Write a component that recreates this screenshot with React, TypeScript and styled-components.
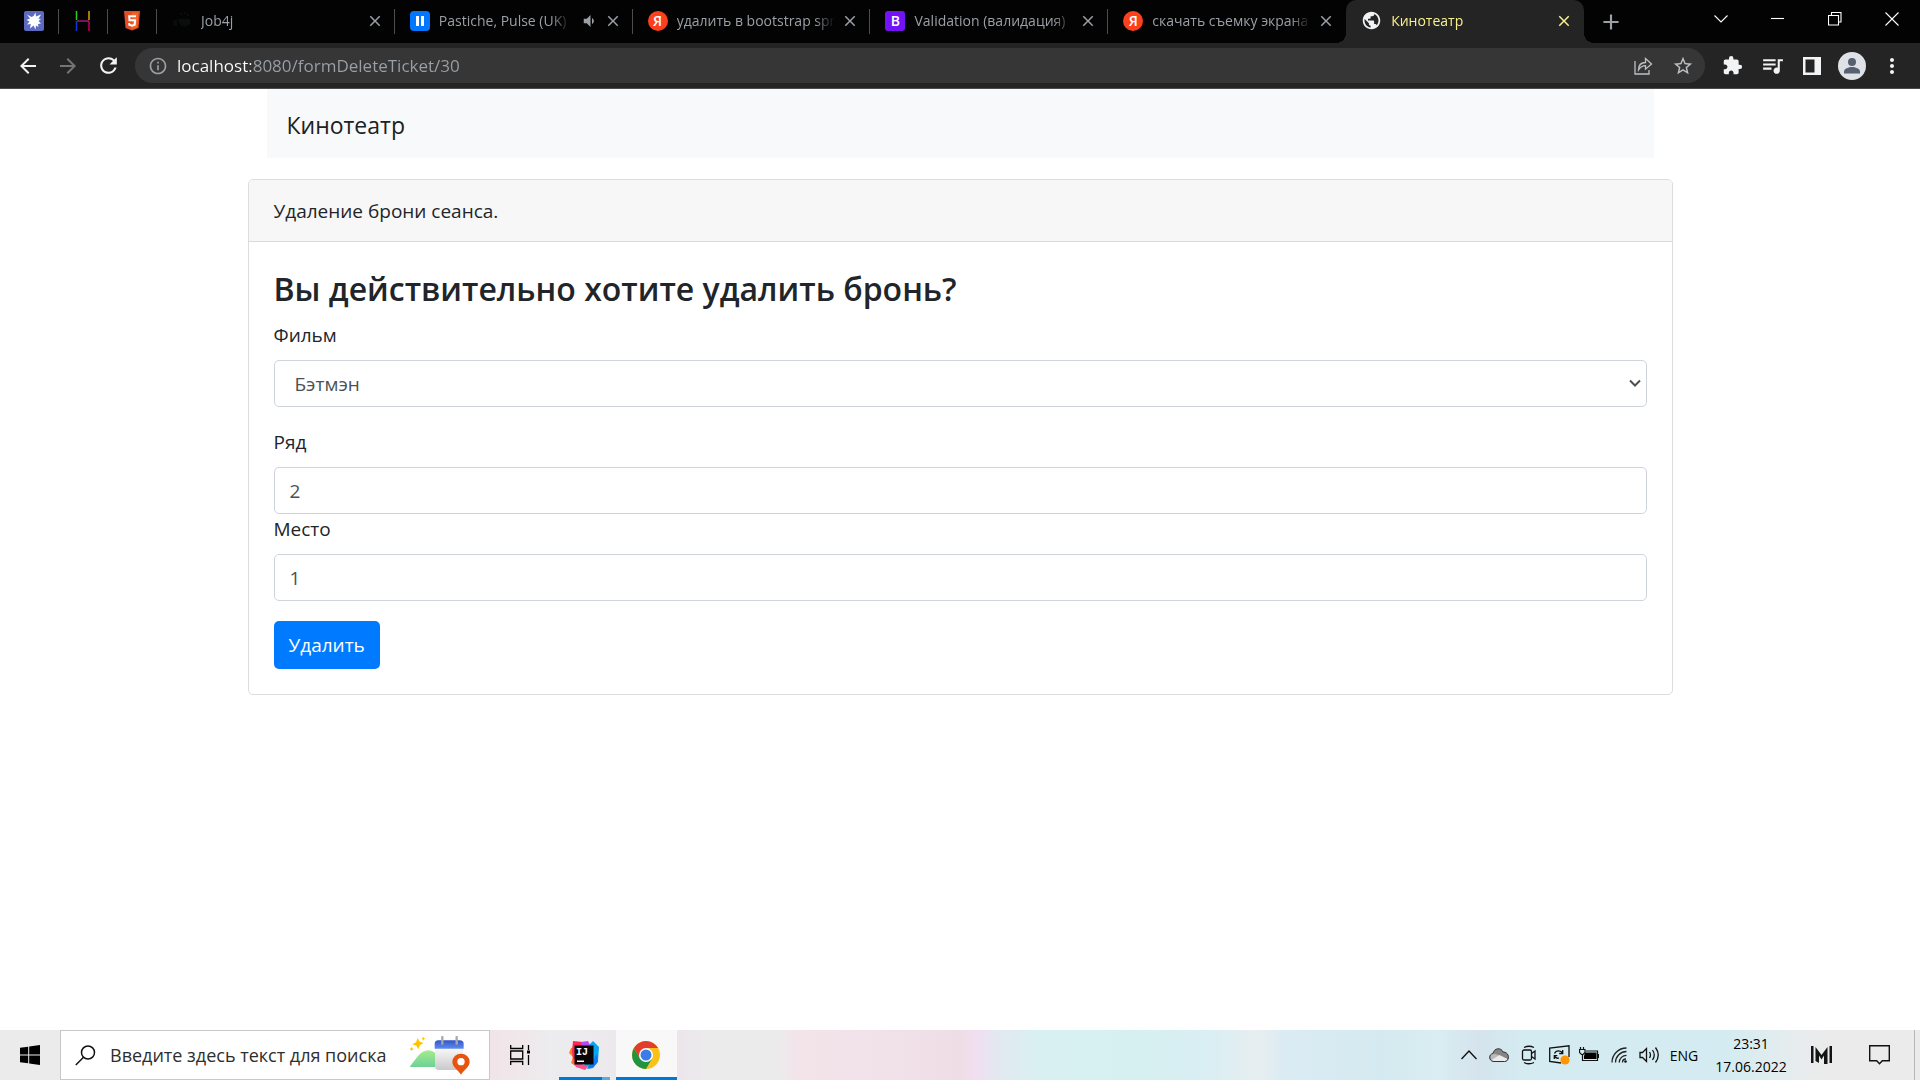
import React, { useState } from "react";
import styled, { createGlobalStyle, css } from "styled-components";
import {
  MdArrowBack,
  MdArrowForward,
  MdRefresh,
  MdInfoOutline,
  MdStarOutline,
  MdExtension,
  MdQueueMusic,
  MdMoreVert,
  MdPublic,
  MdVolumeDown,
  MdClose,
  MdAdd,
} from "react-icons/md";

const font = `"Segoe UI", "Open Sans", "Noto Sans", sans-serif`;

const GlobalStyle = createGlobalStyle`
  *, *::before, *::after { box-sizing: border-box; }
  body { margin: 0; background: #fff; color: #212529; font-family: ${font}; }
  button, input, select { font-family: inherit; margin: 0; }
  svg { display: block; flex: none; }
`;

const Desktop = styled.div`
  display: flex;
  flex-direction: column;
  min-height: 100vh;
`;

const PlainButton = styled.button`
  display: flex;
  align-items: center;
  justify-content: center;
  padding: 0;
  border: 0;
  background: none;
  color: inherit;
`;

/* ---------- Browser chrome ---------- */

const TabStrip = styled.div`
  display: flex;
  align-items: center;
  height: 43px;
  padding-left: 10px;
  background: #030303;
  color: #9aa0a6;
`;

const Separated = css`
  &::after {
    content: "";
    position: absolute;
    right: 0;
    top: 9px;
    width: 1px;
    height: 25px;
    background: #4c4d50;
  }
`;

const PinnedTab = styled(PlainButton)`
  position: relative;
  flex: none;
  width: 49px;
  height: 43px;
  padding: 0 2px 2px 0;
  ${Separated}
`;

const Tabs = styled.div`
  display: flex;
  flex: 1;
  max-width: 1427px;
  min-width: 0;
`;

const Tab = styled.div<{ $active?: boolean; $separated?: boolean }>`
  position: relative;
  display: flex;
  align-items: center;
  flex: 1;
  min-width: 0;
  height: 43px;
  padding: 0 11px 2px 15px;
  ${(p) => p.$separated && Separated}
  ${(p) =>
    p.$active &&
    css`
      background: #242424;
      color: #f7f08c;
      border-radius: 10px 10px 0 0;
      &::before,
      &::after {
        content: "";
        position: absolute;
        bottom: 0;
        width: 10px;
        height: 10px;
      }
      &::before {
        left: -10px;
        background: radial-gradient(circle at 0 0, transparent 10px, #242424 10px);
      }
      &::after {
        right: -10px;
        background: radial-gradient(circle at 100% 0, transparent 10px, #242424 10px);
      }
    `}
`;

const TabTitle = styled(PlainButton)`
  justify-content: flex-start;
  gap: 9px;
  flex: 1;
  min-width: 0;
  height: 100%;
  font-size: 14px;
  line-height: 20px;
`;

const TabText = styled.span`
  flex: 1;
  min-width: 0;
  overflow: hidden;
  white-space: nowrap;
  text-align: left;
  mask-image: linear-gradient(to left, transparent, #000 20px);
`;

const TabClose = styled(PlainButton)`
  flex: none;
  width: 18px;
  height: 18px;
  margin-left: 6px;
`;

const NewTab = styled(PlainButton)`
  width: 28px;
  height: 28px;
  margin-left: 13px;
`;

const WindowControls = styled.div`
  display: flex;
  align-self: flex-start;
  margin-left: auto;
  color: #fff;
`;

const WindowButton = styled(PlainButton)`
  width: 57px;
  height: 37px;
`;

const Toolbar = styled.div`
  display: flex;
  align-items: center;
  height: 46px;
  padding: 0 8px;
  background: #242424;
  border-bottom: 1px solid #4a4a4a;
  color: #f1f3f4;
`;

const ToolButton = styled(PlainButton)<{ $dim?: boolean }>`
  flex: none;
  width: 40px;
  height: 36px;
  color: ${(p) => (p.$dim ? "#747474" : "inherit")};
`;

const Omnibox = styled.label`
  display: flex;
  align-items: center;
  flex: 1;
  height: 35px;
  margin: 0 7px;
  padding: 0 2px 0 13px;
  border-radius: 18px;
  background: #363636;
  color: #bdc1c6;
`;

const Address = styled.input`
  flex: 1;
  min-width: 0;
  margin-left: 9px;
  padding: 0;
  border: 0;
  outline: 0;
  font-size: 17px;
  line-height: 24px;
  color: transparent;
  background: linear-gradient(to right, #fff 74px, #9aa0a6 74px);
  background-clip: text;
  -webkit-background-clip: text;
`;

const LetterIcon = styled.span<{ $bg: string; $round?: boolean }>`
  display: flex;
  align-items: center;
  justify-content: center;
  flex: none;
  width: 20px;
  height: 20px;
  border-radius: ${(p) => (p.$round ? "50%" : "3px")};
  background: ${(p) => p.$bg};
  color: #fff;
  font-size: 14px;
  font-weight: 600;
  line-height: 20px;
`;

/* ---------- Page ---------- */

const Page = styled.main`
  flex: 1;
  width: 100%;
  max-width: 1425px;
  margin: 0 auto;
  font-size: 19px;
  line-height: 30px;
`;

const Navbar = styled.nav`
  display: flex;
  align-items: center;
  height: 69px;
  margin: 0 19px 21px;
  padding: 0 20px;
  background: #f8f9fb;
`;

const Brand = styled.a`
  padding-top: 2px;
  color: #212121;
  font-size: 23px;
  line-height: 38px;
  text-decoration: none;
`;

const Card = styled.section`
  border: 1px solid #dcdddf;
  border-radius: 5px;
  overflow: hidden;
`;

const CardHeader = styled.header`
  padding: 16px 25px 15px;
  background: #f7f7f7;
  border-bottom: 1px solid #d8d9db;
`;

const CardBody = styled.form`
  padding: 25px;
`;

const Heading = styled.h3`
  margin: 0 0 10px;
  font-size: 32px;
  font-weight: 600;
  line-height: 43px;
`;

const FieldGroup = styled.div`
  margin-bottom: 20px;
`;

const Label = styled.label`
  display: block;
  margin-bottom: 10px;
`;

const control = css`
  display: block;
  width: 100%;
  height: 47px;
  border: 1px solid #ced4da;
  border-radius: 5px;
  background: #fff;
  color: #495057;
  font-size: 19px;
  line-height: 30px;
`;

const TextInput = styled.input`
  ${control}
  padding: 0 15px;
`;

const SelectWrap = styled.div`
  position: relative;
  color: #495057;
  svg {
    position: absolute;
    right: 6px;
    top: 17px;
    pointer-events: none;
  }
`;

const Select = styled.select`
  ${control}
  appearance: none;
  padding: 0 20px;
`;

const SubmitButton = styled.button`
  height: 48px;
  padding: 0 15px;
  border: 0;
  border-radius: 5px;
  background: #007bff;
  color: #fff;
  font-size: 19px;
  line-height: 30px;
`;

/* ---------- Taskbar ---------- */

const Taskbar = styled.footer`
  display: flex;
  align-items: stretch;
  height: 50px;
  color: #000;
  background: linear-gradient(
    to right,
    #ebebeb 0%,
    #ebebeb 3%,
    #f2e4e8 25.5%,
    #ececee 29%,
    #ece6ea 35.5%,
    #ebebec 37%,
    #ebebec 40.5%,
    #f3e4ea 41.5%,
    #f1e3e9 45%,
    #efdde5 50%,
    #f1def0 50.8%,
    #e2e8f0 52%,
    #d9f0f3 54%,
    #d6f0f1 59%,
    #daeef3 63%,
    #e7eef0 65.5%,
    #daebf3 67%,
    #d5eaf0 72%,
    #d9edf2 75%,
    #d5e3ed 77%,
    #d4ecf1 79.5%,
    #d4ecf1 90%,
    #e7ecee 93.5%,
    #ebebeb 95%,
    #ebebeb 100%
  );
`;

const TaskButton = styled(PlainButton)<{ $width: number }>`
  width: ${(p) => p.$width}px;
`;

const AppButton = styled(TaskButton)<{ $open?: boolean }>`
  margin-left: ${(p) => (p.$open ? 6 : 10)}px;
  border-bottom: 3px solid #0078d7;
  padding: 3px 1px 0 0;
  ${(p) =>
    p.$open
      ? "background: #f8f8f9;"
      : `border-image: linear-gradient(to right, #0078d7 41px, #62a8e0 41px) 3;`}
`;

const SearchBox = styled.label`
  display: flex;
  align-items: center;
  width: 430px;
  padding: 0 19px 0 14px;
  border: 1px solid #c8c8c8;
  background: #fff;
`;

const SearchInput = styled.input`
  flex: 1;
  min-width: 0;
  margin-left: 14px;
  padding: 0;
  border: 0;
  outline: 0;
  background: none;
  font-size: 18px;
  line-height: 28px;
  &::placeholder {
    color: #2e2e2e;
    opacity: 1;
  }
`;

const Tray = styled.div`
  display: flex;
  margin-left: auto;
  font-size: 14px;
`;

const Clock = styled(TaskButton)`
  flex-direction: column;
  font-size: 14px;
  line-height: 23px;
`;

const Language = styled(TaskButton)`
  font-size: 14px;
`;

const ShowDesktop = styled(TaskButton)`
  border-left: 1px solid #b4b6b8;
`;

/* ---------- Drawings ---------- */

const BurstIcon = () => (
  <svg width="20" height="20" viewBox="0 0 20 20">
    <rect width="20" height="20" rx="2" fill="#5c6bc0" />
    <path
      fill="#fff"
      d="M9.500 5 11.500 1.500l.5 4 5-2-2.500 4.300L17 8l-2.500 2 2.500 2.500-3 .6.500 2.900-2.500-1.500-.5 4-2-4L6 17.500l.8-4.400L3 13.500l2.500-3L2.500 9l3.500-1.500L3 3.500l4.500 2.500z"
    />
  </svg>
);

const GridLetterIcon = () => (
  <svg width="16" height="20" viewBox="0 0 16 20" strokeWidth="1.500" fill="none">
    <path d="M1.500 0v9" stroke="#27d017" />
    <path d="M14 0v9" stroke="#d9a400" />
    <path d="M1.500 10v10" stroke="#1633d8" />
    <path d="M14 10v10" stroke="#c80050" />
    <path d="M2 10h12" stroke="#a0187a" />
  </svg>
);

const Html5Icon = () => (
  <svg width="16" height="20" viewBox="0 0 16 20">
    <path d="M0 0h16l-1.500 17L8 19.500 1.500 17z" fill="#e44d26" />
    <path d="M8 1.500h6.500L13.200 16 8 18z" fill="#f16529" />
    <path d="M12 5.200H5.200l.3 4.100h5.600l-.4 4.400L8 14.600l-2.700-.9-.1-1.700" fill="none" stroke="#fff" strokeWidth="2" />
  </svg>
);

const PauseIcon = () => (
  <svg width="20" height="20" viewBox="0 0 20 20">
    <rect width="20" height="20" rx="4" fill="#0077ff" />
    <path d="M6 5h3v10H6zM11 5h3v10h-3z" fill="#fff" />
  </svg>
);

const JobIcon = () => (
  <svg width="20" height="20" viewBox="0 0 20 20" fill="#0b0c0d">
    <path d="M1 9h4v6H2zM6 8h12v5l-5 3-5-2zM8 2h2v2H8zM12 1h2v2h-2zM15 3h2v2h-2z" />
  </svg>
);

const ShareIcon = () => (
  <svg width="20" height="20" viewBox="0 0 20 20" fill="none" stroke="#bdc1c6" strokeWidth="1.300">
    <path d="M2 5v13h14v-4" />
    <path d="M5.500 14c0-4.500 2.500-7.500 7-7.500V2.500L18.500 8l-6 5.200V9.700c-3 0-5.200 1.300-7 4.300z" />
  </svg>
);

const SidePanelIcon = () => (
  <svg width="18" height="18" viewBox="0 0 18 18">
    <path fillRule="evenodd" d="M0 0h18v18H0zM2.500 2.500h9v13h-9z" fill="#f1f3f4" />
  </svg>
);

const AvatarIcon = () => (
  <svg width="28" height="28" viewBox="0 0 28 28">
    <circle cx="14" cy="14" r="14" fill="#dee1e6" />
    <circle cx="14" cy="10" r="4" fill="#566070" />
    <path d="M6 21.500v-2c0-3 5-4.500 8-4.500s8 1.500 8 4.500v2z" fill="#566070" />
  </svg>
);

const Line = ({ d }: { d: string }) => (
  <svg width="14" height="14" viewBox="0 0 14 14" fill="none" stroke="currentColor" strokeWidth="1.100">
    <path d={d} />
  </svg>
);

const SelectArrow = () => (
  <svg width="12" height="12" viewBox="0 0 12 12" fill="none" stroke="currentColor" strokeWidth="2">
    <path d="M1 3.500 6 8.500l5-5" />
  </svg>
);

const WindowsIcon = () => (
  <svg width="20" height="20" viewBox="0 0 20 20">
    <path d="M0 2.800 8.200 1.700v7.800H0zM9.200 1.500 20 0v9.500H9.200zM0 10.500h8.200v7.800L0 17.200zM9.200 10.500H20V20L9.200 18.500z" />
  </svg>
);

const MagnifierIcon = () => (
  <svg width="21" height="21" viewBox="0 0 21 21" fill="none" stroke="#111" strokeWidth="1.500">
    <circle cx="13" cy="7.500" r="6.500" />
    <path d="M8.500 12.200.8 20" />
  </svg>
);

const SearchArt = () => (
  <svg width="61" height="39" viewBox="28 25 183 117">
    <defs>
      <linearGradient id="hill" x1="0" y1="0" x2="0" y2="1">
        <stop offset="0" stopColor="#a5ec8c" />
        <stop offset="1" stopColor="#6dd197" />
      </linearGradient>
      <linearGradient id="sheet" x1="0" y1="0" x2="0" y2="1">
        <stop offset="0" stopColor="#fafafa" />
        <stop offset="1" stopColor="#c9c9cb" />
      </linearGradient>
      <linearGradient id="top" x1="0" y1="0" x2="0" y2="1">
        <stop offset="0" stopColor="#3355c8" />
        <stop offset="1" stopColor="#5f8cee" />
      </linearGradient>
    </defs>
    <path d="M54 31l6 11 12 4-11 6-5 13-6-11-12-4 11-6z" fill="#ffc400" />
    <path d="M71 27l2 4 4 2-4 2-2 4-2-4-4-2 4-2zM36 57l2 5 5 2-5 2-2 5-2-5-5-2 5-2z" fill="#ffc400" />
    <path d="M30 118C48 96 62 68 86 68s36 26 48 50z" fill="url(#hill)" />
    <path d="M106 60h84v56q0 11-11 11h-62q-11 0-11-11z" fill="url(#sheet)" />
    <path d="M105 63V49q0-11 11-11h64q12 0 12 11v14z" fill="url(#top)" />
    <path d="M128 28v20M171 28v20" stroke="#a3a8b4" strokeWidth="7" strokeLinecap="round" />
    <path d="M184 141c-8-13-26-23-26-38a26 25 0 0 1 52 0c0 15-18 25-26 38z" fill="#e8530e" />
    <circle cx="184" cy="102" r="11" fill="#fff" />
  </svg>
);

const TaskViewIcon = () => (
  <svg width="20" height="20" viewBox="0 0 20 20" fill="none" stroke="#000" strokeWidth="1.300">
    <path d="M.7 0v3.500h12V0M.7 20v-3.500h12V20M.7 6h12v8H.700zM18.500 0v5M18.500 10v10" />
    <path d="M17 5.500h3v3h-3z" fill="#000" stroke="none" />
  </svg>
);

const IdeaIcon = () => (
  <svg width="30" height="30" viewBox="0 0 30 30">
    <path d="M2 8 10 6l5 12-7 9-6-4 2-6-4-4z" fill="#fc801d" />
    <path d="M4 1l10 1 2 10-12 8-1-9z" fill="#fe2857" />
    <path d="M12 2l7-1 3 6-8 6z" fill="#b24bf3" />
    <path d="M19 6l5-5 6 6-1 14-6 7-8-2z" fill="#07a5f2" />
    <path d="M3 20l8 3 8 4-3 3-9-3z" fill="#ff4c8b" />
    <path d="M22 23l6-9 1 8-5 6-6 1z" fill="#087cfa" />
    <rect x="5.500" y="5.500" width="19" height="19" fill="#0c0508" />
    <text x="7" y="15" fill="#fff" fontFamily="'Liberation Mono', monospace" fontWeight="700" fontSize="10">
      IJ
    </text>
    <path d="M8 20.500h7v1.500H8z" fill="#fff" />
  </svg>
);

const ChromeIcon = () => (
  <svg width="28" height="28" viewBox="0 0 28 28">
    <circle cx="14" cy="14" r="14" fill="#fbc116" />
    <path d="M1.900 7A14 14 0 0 1 26.100 7H14v7l-6.100 3.500z" fill="#e33b2e" />
    <path d="M1.900 7A14 14 0 0 0 14 28l6.100-10.500L14 20.500 7.900 17.500z" fill="#229342" />
    <circle cx="14" cy="14" r="7" fill="#fff" />
    <circle cx="14" cy="14" r="5.500" fill="#3a7de8" />
  </svg>
);

const TrayChevron = () => (
  <svg width="16" height="16" viewBox="0 0 16 16" fill="none" stroke="#111" strokeWidth="1.400">
    <path d="M.5 12 8 4l7.500 8" />
  </svg>
);

const CloudIcon = () => (
  <svg width="20" height="16" viewBox="0 0 20 16">
    <path d="M5 14.500C-.5 14.500-.5 7 4 6.500 5 1 12 0 14 5c7 0 7 9.500 1.500 9.500z" fill="#858585" />
    <path d="M3 13.500C.2 12 .8 7 4 6.700c3-.2 5 1 6.500 2z" fill="#b9b9b9" />
    <path d="M5.500 14.500 2.500 13l8-5 8 4c-.6 1.500-1.700 2.500-3 2.500z" fill="#ececec" />
    <path d="M5 14.500C-.5 14.500-.5 7 4 6.500 5 1 12 0 14 5c7 0 7 9.500 1.500 9.500z" fill="none" stroke="#333" />
  </svg>
);

const MeetIcon = () => (
  <svg width="16" height="20" viewBox="0 0 16 20" fill="none" stroke="#111" strokeWidth="1.300">
    <rect x="1.500" y="5" width="9" height="10" rx="1.500" />
    <path d="M10.500 8.500 14 6v8l-3.500-2.500M3 2.500q5-2.500 10 0M3 17.500q5 2.500 10 0" />
  </svg>
);

const UpdateIcon = () => (
  <svg width="21" height="20" viewBox="0 0 21 20" fill="none" stroke="#111" strokeWidth="1.300">
    <path d="M12 18 .7 16.500V3L20 .8V12" />
    <path d="M5.500 8.500C7 5 12 5 13.500 8M13.700 5v3.500h-3.500M10 13c-2 .6-3.800-.3-4.500-2M5.300 14v-3.300h3" />
    <circle cx="16" cy="15" r="4.600" fill="#ff9500" stroke="none" />
  </svg>
);

const BatteryIcon = () => (
  <svg width="20" height="16" viewBox="0 0 20 16">
    <path d="M6 5.500h11.500v6.500H5V9z" />
    <path d="M7 4h11.500v9.500H3.500V8M19.500 7v4M1.500 0v3M4.500 0v3" fill="none" stroke="#111" strokeWidth="1.200" />
    <path d="M.5 2.500h5.500v3L4 7.500H2.500l-2-2z" fill="none" stroke="#111" strokeWidth="1.200" />
  </svg>
);

const WifiIcon = () => (
  <svg width="16" height="16" viewBox="0 0 16 16" fill="none" stroke="#222" strokeWidth="1.300">
    <path d="M1 15.500C1 7.500 7.500 1 15.500 1M4.500 15.500c0-6 5-11 11-11M8.300 15.500c0-4 3.200-7.200 7.200-7.200" />
    <path d="M11.500 15.500c0-2 1.500-3.500 3.500-3.500" />
    <circle cx="14.500" cy="14.500" r="1.300" fill="#111" stroke="none" />
  </svg>
);

const SoundIcon = () => (
  <svg width="21" height="18" viewBox="0 0 21 18" fill="none" stroke="#111" strokeWidth="1.300">
    <path d="M1 6.500h2.500l4-4v13l-4-4H1z" />
    <path d="M10.500 6q2 3 0 6M13.500 4q3.500 5 0 10M16.500 1.500q5.500 7.500 0 15" />
  </svg>
);

const BarsIcon = () => (
  <svg width="21" height="18" viewBox="0 0 21 18">
    <path d="M0 0h2.500v17H0zM18.500 0H21v17h-2.500zM4.500 1l6 8 6-8v17H13V9.500l-2.500 4L8 9.500V17l-3.500-2z" fill="#141414" />
  </svg>
);

const NoteIcon = () => (
  <svg width="21" height="20" viewBox="0 0 21 20" fill="none" stroke="#111" strokeWidth="1.400">
    <path d="M.7.7h19.600v15h-7l-2.800 3-2.800-3h-7z" />
  </svg>
);

const pinned = [
  { name: "Закладка", icon: <BurstIcon /> },
  { name: "H", icon: <GridLetterIcon /> },
  { name: "HTML5", icon: <Html5Icon /> },
];

const tabs = [
  { title: "Job4j", icon: <JobIcon /> },
  { title: "Pastiche, Pulse (UK)", icon: <PauseIcon />, sound: true },
  { title: "удалить в bootstrap spring", icon: <LetterIcon $round $bg="#fc3f1d">Я</LetterIcon> },
  { title: "Validation (валидация)", icon: <LetterIcon $bg="#7312f5">B</LetterIcon> },
  { title: "скачать съемку экрана", icon: <LetterIcon $round $bg="#fc3f1d">Я</LetterIcon> },
  { title: "Кинотеатр", icon: <MdPublic size={21} color="#f1f3f4" /> },
];

const trayIcons = [
  { name: "Скрытые значки", icon: <TrayChevron /> },
  { name: "OneDrive", icon: <CloudIcon /> },
  { name: "Meet Now", icon: <MeetIcon /> },
  { name: "Обновления", icon: <UpdateIcon /> },
  { name: "Батарея", icon: <BatteryIcon /> },
  { name: "Сеть", icon: <WifiIcon /> },
  { name: "Громкость", icon: <SoundIcon /> },
];

export default function App() {
  const [row, setRow] = useState("2");
  const [seat, setSeat] = useState("1");
  const last = tabs.length - 1;

  return (
    <Desktop>
      <GlobalStyle />
      <TabStrip>
        {pinned.map((p) => (
          <PinnedTab key={p.name} aria-label={p.name}>
            {p.icon}
          </PinnedTab>
        ))}
        <Tabs>
          {tabs.map((t, i) => (
            <Tab key={t.title} $active={i === last} $separated={i < last - 1}>
              <TabTitle>
                {t.icon}
                <TabText>{t.title}</TabText>
                {t.sound && <MdVolumeDown size={18} />}
              </TabTitle>
              <TabClose aria-label="Закрыть вкладку">
                <MdClose size={18} />
              </TabClose>
            </Tab>
          ))}
        </Tabs>
        <NewTab aria-label="Новая вкладка">
          <MdAdd size={26} />
        </NewTab>
        <WindowControls>
          <WindowButton aria-label="Поиск вкладок">
            <Line d="M.5 3.500 7 10l6.500-6.500" />
          </WindowButton>
          <WindowButton aria-label="Свернуть">
            <Line d="M0 6.500h13" />
          </WindowButton>
          <WindowButton aria-label="Развернуть">
            <Line d="M.5 3.500h10V13H.5zM3.500 3.500v-3H13V10h-2.500" />
          </WindowButton>
          <WindowButton aria-label="Закрыть">
            <Line d="M.5.500l13 13M13.500.500l-13 13" />
          </WindowButton>
        </WindowControls>
      </TabStrip>

      <Toolbar>
        <ToolButton aria-label="Назад">
          <MdArrowBack size={24} />
        </ToolButton>
        <ToolButton $dim aria-label="Вперёд">
          <MdArrowForward size={24} />
        </ToolButton>
        <ToolButton aria-label="Обновить">
          <MdRefresh size={25} />
        </ToolButton>
        <Omnibox>
          <MdInfoOutline size={20} color="#9aa0a6" />
          <Address aria-label="Адрес" defaultValue="localhost:8080/formDeleteTicket/30" />
          <ToolButton aria-label="Поделиться">
            <ShareIcon />
          </ToolButton>
          <ToolButton aria-label="В избранное">
            <MdStarOutline size={22} />
          </ToolButton>
        </Omnibox>
        <ToolButton aria-label="Расширения">
          <MdExtension size={21} />
        </ToolButton>
        <ToolButton aria-label="Медиа">
          <MdQueueMusic size={25} />
        </ToolButton>
        <ToolButton aria-label="Боковая панель">
          <SidePanelIcon />
        </ToolButton>
        <ToolButton aria-label="Профиль">
          <AvatarIcon />
        </ToolButton>
        <ToolButton aria-label="Меню">
          <MdMoreVert size={24} />
        </ToolButton>
      </Toolbar>

      <Page>
        <Navbar>
          <Brand href="#">Кинотеатр</Brand>
        </Navbar>
        <Card>
          <CardHeader>Удаление брони сеанса.</CardHeader>
          <CardBody onSubmit={(e) => e.preventDefault()}>
            <Heading>Вы действительно хотите удалить бронь?</Heading>
            <FieldGroup>
              <Label htmlFor="film">Фильм</Label>
              <SelectWrap>
                <Select id="film">
                  <option>Бэтмэн</option>
                </Select>
                <SelectArrow />
              </SelectWrap>
            </FieldGroup>
            <FieldGroup>
              <Label htmlFor="row">Ряд</Label>
              <TextInput id="row" value={row} onChange={(e) => setRow(e.target.value)} />
              <Label htmlFor="seat">Место</Label>
              <TextInput id="seat" value={seat} onChange={(e) => setSeat(e.target.value)} />
            </FieldGroup>
            <SubmitButton type="submit">Удалить</SubmitButton>
          </CardBody>
        </Card>
      </Page>

      <Taskbar>
        <TaskButton $width={60} aria-label="Пуск">
          <WindowsIcon />
        </TaskButton>
        <SearchBox>
          <MagnifierIcon />
          <SearchInput aria-label="Поиск" placeholder="Введите здесь текст для поиска" />
          <SearchArt />
        </SearchBox>
        <TaskButton $width={59} aria-label="Представление задач">
          <TaskViewIcon />
        </TaskButton>
        <AppButton $width={51} aria-label="IntelliJ IDEA">
          <IdeaIcon />
        </AppButton>
        <AppButton $width={61} $open aria-label="Google Chrome">
          <ChromeIcon />
        </AppButton>
        <Tray>
          {trayIcons.map((t) => (
            <TaskButton key={t.name} $width={30} aria-label={t.name}>
              {t.icon}
            </TaskButton>
          ))}
          <Language $width={40}>ENG</Language>
          <Clock $width={94}>
            <span>23:31</span>
            <span>17.06.2022</span>
          </Clock>
          <TaskButton $width={46} aria-label="Монитор">
            <BarsIcon />
          </TaskButton>
          <TaskButton $width={70} aria-label="Уведомления">
            <NoteIcon />
          </TaskButton>
          <ShowDesktop $width={6} aria-label="Показать рабочий стол" />
        </Tray>
      </Taskbar>
    </Desktop>
  );
}
